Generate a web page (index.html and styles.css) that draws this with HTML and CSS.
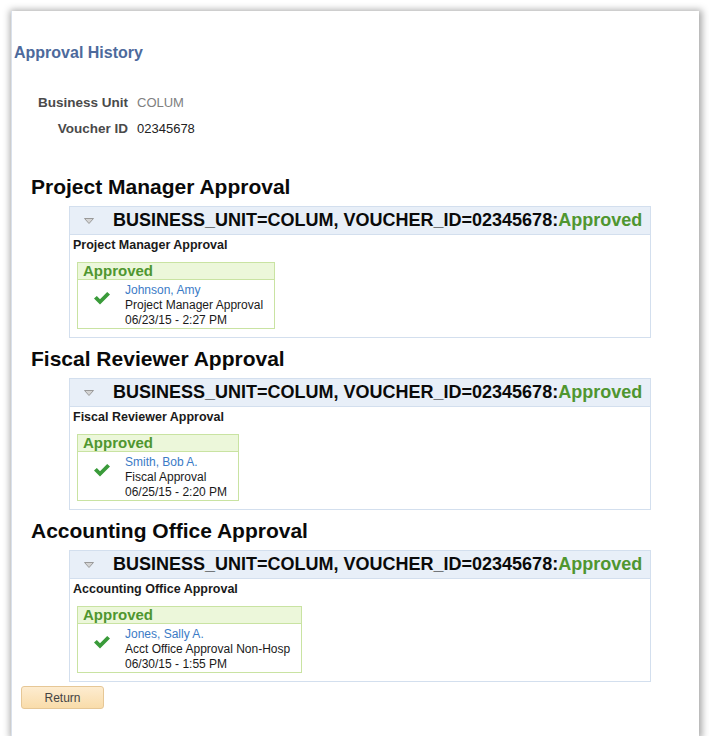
FILE: index.html
```html
<!DOCTYPE html>
<html lang="en">
<head>
  <meta charset="UTF-8">
  <title>Approval History</title>
  <link rel="stylesheet" href="styles.css">
</head>
<body>
  <div class="panel">
    <h1 class="title">Approval History</h1>

    <div class="fields">
      <span class="label">Business Unit</span>
      <span class="value muted">COLUM</span>
      <span class="label">Voucher ID</span>
      <span class="value">02345678</span>
    </div>

    <h2 class="stage">Project Manager Approval</h2>
    <div class="box">
      <div class="box-head">
        <svg class="arrow" width="10" height="6" viewBox="0 0 10 6"><polygon points="0.5,0.5 9.5,0.5 5,5.5" fill="#d4d4d4" stroke="#9a9a9a" stroke-width="1"/></svg>
        <span>BUSINESS_UNIT=COLUM, VOUCHER_ID=02345678:<span class="ok">Approved</span></span>
      </div>
      <div class="step">Project Manager Approval</div>
      <div class="approver">
        <div class="approver-head">Approved</div>
        <div class="approver-body">
          <svg class="check" width="18" height="14" viewBox="0 0 18 14"><path d="M1 7.5 L3.8 5 L7 8.2 L14.2 1 L17 3.6 L7 13.4 Z" fill="#3a9b3a"/></svg>
          <div class="lines">
            <a class="name">Johnson, Amy</a>
            <div>Project Manager Approval</div>
            <div>06/23/15 - 2:27 PM</div>
          </div>
        </div>
      </div>
    </div>

    <h2 class="stage">Fiscal Reviewer Approval</h2>
    <div class="box">
      <div class="box-head">
        <svg class="arrow" width="10" height="6" viewBox="0 0 10 6"><polygon points="0.5,0.5 9.5,0.5 5,5.5" fill="#d4d4d4" stroke="#9a9a9a" stroke-width="1"/></svg>
        <span>BUSINESS_UNIT=COLUM, VOUCHER_ID=02345678:<span class="ok">Approved</span></span>
      </div>
      <div class="step">Fiscal Reviewer Approval</div>
      <div class="approver">
        <div class="approver-head">Approved</div>
        <div class="approver-body">
          <svg class="check" width="18" height="14" viewBox="0 0 18 14"><path d="M1 7.5 L3.8 5 L7 8.2 L14.2 1 L17 3.6 L7 13.4 Z" fill="#3a9b3a"/></svg>
          <div class="lines">
            <a class="name">Smith, Bob A.</a>
            <div>Fiscal Approval</div>
            <div>06/25/15 - 2:20 PM</div>
          </div>
        </div>
      </div>
    </div>

    <h2 class="stage">Accounting Office Approval</h2>
    <div class="box">
      <div class="box-head">
        <svg class="arrow" width="10" height="6" viewBox="0 0 10 6"><polygon points="0.5,0.5 9.5,0.5 5,5.5" fill="#d4d4d4" stroke="#9a9a9a" stroke-width="1"/></svg>
        <span>BUSINESS_UNIT=COLUM, VOUCHER_ID=02345678:<span class="ok">Approved</span></span>
      </div>
      <div class="step">Accounting Office Approval</div>
      <div class="approver">
        <div class="approver-head">Approved</div>
        <div class="approver-body">
          <svg class="check" width="18" height="14" viewBox="0 0 18 14"><path d="M1 7.5 L3.8 5 L7 8.2 L14.2 1 L17 3.6 L7 13.4 Z" fill="#3a9b3a"/></svg>
          <div class="lines">
            <a class="name">Jones, Sally A.</a>
            <div>Acct Office Approval Non-Hosp</div>
            <div>06/30/15 - 1:55 PM</div>
          </div>
        </div>
      </div>
    </div>

    <button class="return">Return</button>
  </div>
</body>
</html>
```

FILE: styles.css
```css
body {
  margin: 0;
  padding: 11px 0 0 11px;
  background: #fff;
  font-family: "Liberation Sans", Arial, sans-serif;
  color: #222;
}
.panel {
  width: 688px;
  height: 725px;
  box-sizing: border-box;
  background: #fff;
  border-left: 1px solid #d9e1ec;
  box-shadow: 1px 1px 7px 2px rgba(0, 0, 0, 0.35);
  padding-top: 32px;
}
.title {
  margin: 0 0 27px 2px;
  font-size: 16px;
  line-height: 20px;
  font-weight: bold;
  color: #4d6a9c;
}
.fields {
  display: grid;
  grid-template-columns: 108px auto;
  column-gap: 9px;
  margin-left: 8px;
  font-size: 13px;
  line-height: 26px;
}
.label {
  text-align: right;
  font-size: 13.5px;
  font-weight: bold;
  color: #4a4a4a;
}
.value {
  color: #222;
}
.muted {
  color: #808080;
}
.stage {
  margin: 33px 0 7px 19px;
  font-size: 21px;
  line-height: 24px;
  font-weight: bold;
  color: #0a0a0a;
}
.box + .stage {
  margin-top: 9px;
}
.box {
  margin-left: 57px;
  width: 582px;
  box-sizing: border-box;
  border: 1px solid #d3dfee;
  padding-bottom: 8px;
}
.box-head {
  display: flex;
  align-items: center;
  height: 27px;
  padding-left: 14px;
  background: #e8eff8;
  border-bottom: 1px solid #d3dfee;
  font-size: 18px;
  font-weight: bold;
  color: #0a0a0a;
  white-space: nowrap;
}
.arrow {
  margin-right: 19px;
  margin-top: 1px;
}
.ok {
  color: #4f9630;
}
.step {
  margin: 2px 0 9px 3px;
  font-size: 12.5px;
  line-height: 16px;
  font-weight: bold;
  color: #1a1a1a;
}
.approver {
  margin-left: 7px;
  width: fit-content;
  border: 1px solid #c9e3a2;
}
.approver-head {
  background: #ecf7da;
  border-bottom: 1px solid #c9e3a2;
  padding-left: 5px;
  font-size: 15px;
  line-height: 16px;
  font-weight: bold;
  color: #4f9630;
}
.approver-body {
  display: flex;
  align-items: flex-start;
  padding: 3px 11px 0 15px;
}
.check {
  margin: 8px 14px 0 0;
}
.lines {
  font-size: 12px;
  line-height: 15px;
  color: #1a1a1a;
}
.name {
  display: block;
  color: #3b7bc6;
}
.return {
  margin: 4px 0 0 9px;
  width: 83px;
  height: 23px;
  padding: 0;
  border: 1px solid #e6c796;
  border-radius: 3px;
  background: linear-gradient(#fdecd0, #f9dcaa);
  font-family: "Liberation Sans", Arial, sans-serif;
  font-size: 12px;
  color: #444;
}
```
